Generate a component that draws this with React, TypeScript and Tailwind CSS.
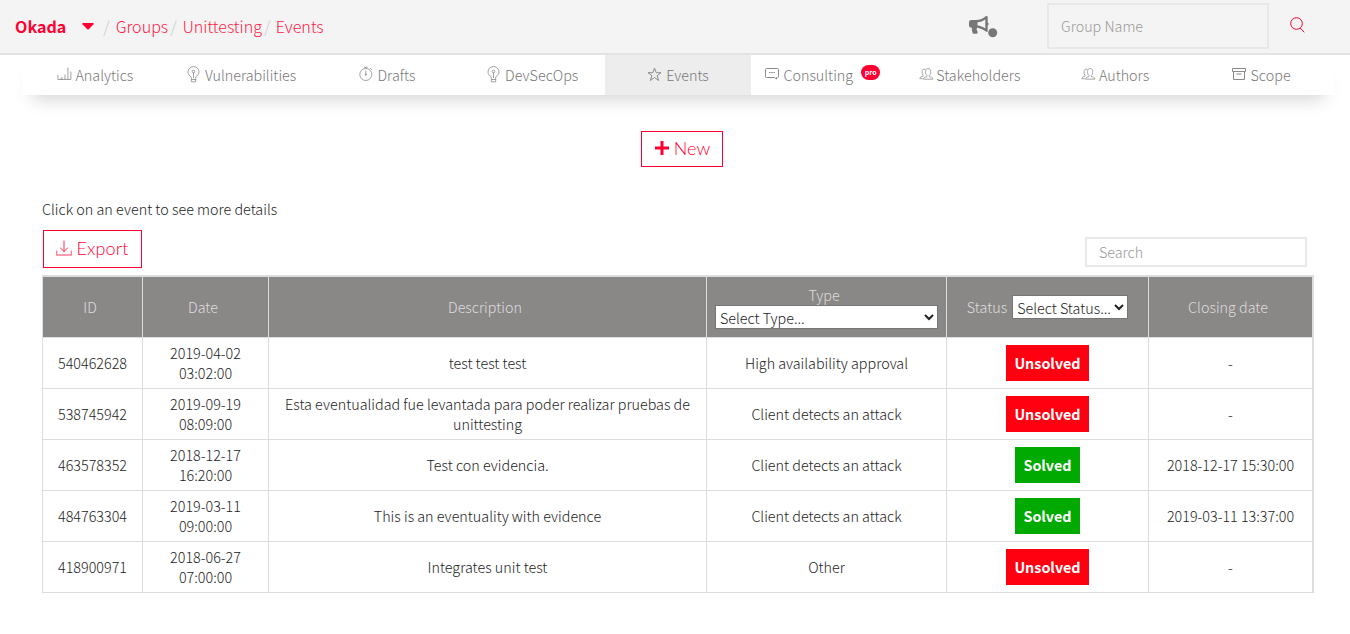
import type { ReactNode } from "react";

const stroke = { fill: "none", stroke: "#8a8a8a", strokeWidth: 0.8 };

function ChartIcon() {
  return (
    <svg width="15" height="16" viewBox="0 0 15 16" className="shrink-0 -translate-y-px" {...stroke}>
      <path d="M.9 9V13.500H13.900V5.500M3.900 13.500V12M5 13.500V11M8 13.500V8.500M10.900 13.500V1.500" />
    </svg>
  );
}

function BulbIcon() {
  return (
    <svg width="13" height="17" viewBox="0 0 13 17" className="shrink-0 -translate-y-px" {...stroke}>
      <path d="M4.300 12.500V11C2.300 9.500 1 8.200 1 5.900a5.500 5.300 0 0 1 11 0C12 8.200 10.500 9.500 8.700 11v1.500M4.300 12.500v3.300h4.400v-3.300M4 13.500h5M6.500 6.500V12" />
      <circle cx="6.500" cy="5.500" r="1.300" />
    </svg>
  );
}

function StopwatchIcon() {
  return (
    <svg width="14" height="16" viewBox="0 0 14 16" className="shrink-0 -translate-y-px" {...stroke}>
      <circle cx="6.800" cy="8.500" r="6" />
      <path d="M5 1.200h3.600M6.800 1v1.500M6.800 4.500v5M11.200 2l1.700 1.800" />
      <circle cx="6.800" cy="8.500" r=".6" />
    </svg>
  );
}

function StarIcon() {
  return (
    <svg width="15" height="15" viewBox="0 0 15 15" className="shrink-0 -translate-y-px" {...stroke} strokeWidth="1">
      <path d="M7.500 1.200 9.200 5.700H14L10.200 8.600 11.600 13.500 7.500 10.500 3.400 13.500 4.800 8.600 1 5.700H5.800Z" />
    </svg>
  );
}

function CommentIcon() {
  return (
    <svg width="14" height="15" viewBox="0 0 14 15" className="shrink-0 -translate-y-[2px]" {...stroke} strokeWidth="1">
      <path d="M1.500 2.500h11a1 1 0 0 1 1 1v7a1 1 0 0 1-1 1H11.500v1.500l-2-1.500H1.500a1 1 0 0 1-1-1v-7a1 1 0 0 1 1-1Z" />
      <path d="M4 6.500h6" strokeDasharray="1.500 .7" />
    </svg>
  );
}

function UsersIcon() {
  return (
    <svg width="15" height="14" viewBox="0 0 16 14" className="shrink-0 -translate-y-px" {...stroke}>
      <path d="M8.500 8.700C7.300 7.600 7 6.200 7 4.500 7 2.200 8 1.200 9.700 1.200s2.800 1 2.800 3.300c0 1.700-.4 3.100-1.500 4.200v1c1.800.6 3.800.9 3.800 2.800H4.800c0-1.900 2-2.200 3.700-2.800Z" />
      <path d="M6.800 2.100C4.600 1.200 3.200 2.400 3.200 4.800c0 1.600.3 2.700 1.200 3.600v.9C2.600 9.900.8 10.200.8 12H4" />
    </svg>
  );
}

function BoxIcon() {
  return (
    <svg width="14" height="14" viewBox="0 0 14 14" className="shrink-0 -translate-y-px" {...stroke} strokeWidth="1">
      <path d="M.5 1.500h13v3H.5zM1.500 4.500v8h11v-8M4.500 7h5" />
    </svg>
  );
}

function MegaphoneIcon() {
  return (
    <svg width="30" height="24" viewBox="0 0 30 24" fill="#777" className="translate-y-px">
      <path
        fillRule="evenodd"
        d="M18.500 1c.7 0 1.200.5 1.200 1.200v5.300a1.700 1.700 0 0 1 0 3v5.300c0 1.300-1 1.500-1.800.8C15.200 14.500 12 13.200 9 12.800c-.6 1.300-.3 2.200.3 3.100.7 1 .4 2.600-.8 2.800H5.800c-.7 0-1.100-.3-1.300-1-.4-1.500-.8-3-.6-5C2 12.700 1 12 1 10.500V7.300C1 5.700 2.100 5 3.300 5H8c3.700 0 7.300-1.500 9.700-3.700.3-.2.500-.3.800-.3ZM17.300 4.400C15 6 12.200 7 9.500 7.300v3.300c2.700.3 5.500 1.300 7.800 2.900Z"
      />
      <circle cx="24.700" cy="17.800" r="4.500" />
    </svg>
  );
}

function SearchIcon() {
  return (
    <svg width="15" height="16" viewBox="0 0 15 16" fill="none" stroke="#f2002e" strokeWidth="1">
      <circle cx="6.500" cy="6.500" r="5.800" />
      <path d="m10.300 11 4 4.300" />
    </svg>
  );
}

function DownloadIcon() {
  return (
    <svg width="16" height="17" viewBox="0 0 16 17" fill="none" stroke="#ff2a50" strokeWidth="1" className="-translate-x-px">
      <path d="M8 .5v11M4.200 7.800l3.800 3.700 3.800-3.700" />
      <path d="M.7 10.500v4.500h14.600v-4.500" stroke="#ff8097" strokeWidth="1.400" />
    </svg>
  );
}

const tabs: { label: string; icon: ReactNode; gap: string; active?: boolean; pro?: boolean }[] = [
  { label: "Analytics", icon: <ChartIcon />, gap: "gap-[3px] pl-px" },
  { label: "Vulnerabilities", icon: <BulbIcon />, gap: "gap-[5px] pl-[2px]" },
  { label: "Drafts", icon: <StopwatchIcon />, gap: "gap-1 pl-[2px]" },
  { label: "DevSecOps", icon: <BulbIcon />, gap: "gap-[5px] pl-px" },
  { label: "Events", icon: <StarIcon />, gap: "gap-1", active: true },
  { label: "Consulting", icon: <CommentIcon />, gap: "gap-1", pro: true },
  { label: "Stakeholders", icon: <UsersIcon />, gap: "gap-[2.500px]" },
  { label: "Authors", icon: <UsersIcon />, gap: "gap-[2.500px]" },
  { label: "Scope", icon: <BoxIcon />, gap: "gap-[5px]" },
];

const rows = [
  ["540462628", "2019-04-02 03:02:00", "test test test", "High availability approval", "Unsolved", "-"],
  ["538745942", "2019-09-19 08:09:00", "Esta eventualidad fue levantada para poder realizar pruebas de unittesting", "Client detects an attack", "Unsolved", "-"],
  ["463578352", "2018-12-17 16:20:00", "Test con evidencia.", "Client detects an attack", "Solved", "2018-12-17 15:30:00"],
  ["484763304", "2019-03-11 09:00:00", "This is an eventuality with evidence", "Client detects an attack", "Solved", "2019-03-11 13:37:00"],
  ["418900971", "2018-06-27 07:00:00", "Integrates unit test", "Other", "Unsolved", "-"],
];

const columns = "grid grid-cols-[100px_126px_438px_240px_202px_164px]";
const headCell = "flex items-center justify-center border-l border-[#ddd] pr-[5px]";
const bodyCell = "flex items-center justify-center border-l border-[#ddd] text-center";

function Header() {
  return (
    <header className="flex h-[55px] items-center border-b-2 border-[#e3e3e3] bg-[#f4f4f4] pl-[15px]">
      <nav className="-mt-px flex items-center text-[16.1px] text-[#ff1a47]">
        <b className="font-bold text-[#ff0033]">Okada</b>
        <svg width="12" height="7" viewBox="0 0 12 7" className="ml-4" fill="#ff0033">
          <path d="M1 0h10q1.200.2.500 1.200L7 6q-1 1-2 0L.5 1.200Q-.2.200 1 0Z" />
        </svg>
        <span className="ml-[9px] text-[#ccc]">/</span>
        <a className="ml-[6px]">Groups</a>
        <span className="ml-[2px] text-[#ccc]">/</span>
        <a className="ml-[6px]">Unittesting</a>
        <span className="ml-[2px] text-[#ccc]">/</span>
        <a className="ml-[5.500px]">Events</a>
      </nav>
      <div className="-mt-[2px] ml-auto flex items-center">
        <MegaphoneIcon />
        <input
          placeholder="Group Name"
          className="ml-[49px] h-[46px] w-[222px] border-2 border-[#e8e8e8] bg-[#f4f4f4] px-3 placeholder:text-[#999]"
        />
        <div className="-mt-[2px] mr-[45px] ml-[21px]">
          <SearchIcon />
        </div>
      </div>
    </header>
  );
}

export default function App() {
  return (
    <div className="h-[634px] overflow-hidden bg-white font-['Noto_Sans_CJK_JP','Noto_Sans_CJK_SC',sans-serif] text-[14.340px] leading-5 font-light text-[#222]">
      <Header />
      <div className="mr-[16px] ml-[22px] grid h-10 grid-cols-9 bg-white text-[#777] shadow-[0_14px_18px_-10px_rgba(0,0,0,0.18)]">
        {tabs.map((tab) => (
          <a
            key={tab.label}
            className={`flex items-center justify-center ${tab.gap} ${tab.active ? "bg-[#ededed]" : ""}`}
          >
            {tab.icon}
            <span>{tab.label}</span>
            {tab.pro && (
              <span className="-mt-[6px] mr-[2px] ml-1 flex h-[15px] w-[19px] items-center justify-center rounded-full bg-[#ff0033] text-[7px] font-bold text-white">
                pro
              </span>
            )}
          </a>
        ))}
      </div>

      <main className="mr-9 ml-[42px] flex flex-col">
        <button className="mt-9 ml-[599px] flex h-9 w-[82px] items-center justify-center gap-[5px] border border-[#ff0033] pb-[3px] pl-px font-[Lato] text-[18px] text-[#ff0033]">
          <svg width="14" height="14" viewBox="0 0 14 14" fill="none" stroke="#ff0033" strokeWidth="3">
            <path d="M7 0v14M0 7h14" />
          </svg>
          New
        </button>
        <p className="mt-8 h-5 tracking-[.01px]">Click on an event to see more details</p>
        <div className="mt-[11px] flex h-[45px] items-start justify-between">
          <button className="ml-px flex h-[38px] w-[99px] items-center justify-center gap-1 border border-[#ff0033] pb-[2px] font-[Lato] text-[18px] text-[#ff0033]">
            <DownloadIcon />
            <span className="tracking-[.1px]">Export</span>
          </button>
          <input
            placeholder="Search"
            className="mt-[7px] mr-[7px] h-[30px] w-[222px] border-2 border-[#e8e8e8] px-3 pb-[2px] placeholder:text-[#999]"
          />
        </div>

        <div className="border-t-2 border-r-2 border-b border-[#ddd]">
          <div className={`${columns} h-[60px] bg-[#8a8787] text-[#ddd]`}>
            <div className={headCell}>ID</div>
            <div className={headCell}>Date</div>
            <div className={headCell}>Description</div>
            <div className="flex flex-col items-center justify-center border-l border-[#ddd] px-2">
              <span className="mr-[5px] h-[19px] leading-[18px]">Type</span>
              <select className="h-6 w-[223px] border border-[#767676] bg-white text-[#222]">
                <option>Select Type...</option>
              </select>
            </div>
            <div className="flex items-center justify-center gap-[5px] border-l border-[#ddd]">
              Status
              <select className="-mt-px h-6 w-[116px] border border-[#767676] bg-white text-[#222]">
                <option>Select Status...</option>
              </select>
            </div>
            <div className={headCell}>Closing date</div>
          </div>
          {rows.map(([id, date, description, type, status, closing]) => (
            <div key={id} className={`${columns} h-[51px] border-t border-[#ddd]`}>
              <div className={bodyCell}>{id}</div>
              <div className={`${bodyCell} px-6`}>{date}</div>
              <div className={`${bodyCell} px-2`}>{description}</div>
              <div className={bodyCell}>{type}</div>
              <div className={bodyCell}>
                <span
                  className={`flex h-9 items-center font-bold text-white ${
                    status === "Solved" ? "w-[65px] justify-center bg-[#00aa00]" : "w-[83px] justify-center bg-[#ff0011]"
                  }`}
                >
                  {status}
                </span>
              </div>
              <div className={bodyCell}>{closing}</div>
            </div>
          ))}
        </div>
      </main>
    </div>
  );
}
